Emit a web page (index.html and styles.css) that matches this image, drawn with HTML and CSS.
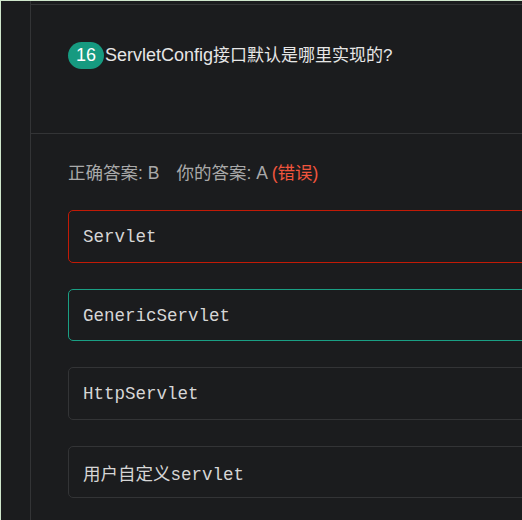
FILE: index.html
```html
<!DOCTYPE html>
<html lang="zh">
<head>
<meta charset="utf-8">
<link rel="stylesheet" href="styles.css">
</head>
<body>
<div class="page">
  <div class="side"></div>
  <div class="main">
    <div class="header">
      <div class="title">
        <span class="badge">16</span><span class="qtext">ServletConfig<span class="cjk">接口默认是哪里实现的?</span></span>
      </div>
    </div>
    <div class="body">
      <div class="result">正确答案: B<span class="sp"></span>你的答案: A <span class="wrong">(错误)</span></div>
      <div class="options">
        <div class="opt opt-wrong">Servlet</div>
        <div class="opt opt-right">GenericServlet</div>
        <div class="opt">HttpServlet</div>
        <div class="opt">用户自定义servlet</div>
      </div>
    </div>
  </div>
</div>
</body>
</html>
```
FILE: styles.css
```css
html, body {
  margin: 0;
  padding: 0;
  background: #1b1c1e;
  overflow: hidden;
}
.page {
  display: flex;
  height: 519px;
  border-top: 1px solid #cfe6cc;
  border-left: 1px solid #cfe6cc;
  background: #1b1c1e;
  font-family: "Liberation Sans", "Noto Sans CJK SC", sans-serif;
}
.side {
  width: 29px;
  flex: none;
}
.main {
  flex: 1;
  border-left: 1px solid #333436;
  padding-top: 3px;
  overflow: hidden;
}
.header {
  height: 128px;
  box-sizing: content-box;
  border-top: 1px solid #333436;
  border-bottom: 1px solid #333436;
  padding-left: 37px;
}
.title {
  display: flex;
  align-items: center;
  padding-top: 37px;
}
.badge {
  display: inline-block;
  width: 36px;
  height: 27px;
  line-height: 27px;
  border-radius: 14px;
  background: #169a80;
  color: #ffffff;
  font-size: 18px;
  text-align: center;
  flex: none;
}
.qtext {
  margin-left: 1px;
  color: #e6e6e6;
  font-size: 18px;
  line-height: 27px;
}
.cjk {
  font-size: 17px;
}
.body {
  padding: 26px 0 0 37px;
}
.result {
  color: #a9a9a9;
  font-size: 17.5px;
  line-height: 24px;
  height: 24px;
  padding-top: 1px;
}
.sp {
  display: inline-block;
  width: 17px;
}
.wrong {
  color: #f1553d;
}
.options {
  display: flex;
  flex-direction: column;
  gap: 26px;
  margin-top: 25px;
}
.opt {
  box-sizing: border-box;
  width: 520px;
  height: 52.5px;
  border: 1px solid #333436;
  border-radius: 5px;
  padding: 2px 0 0 14px;
  display: flex;
  align-items: center;
  color: #d6d6d6;
  font-family: "Liberation Mono", "Noto Sans CJK SC", monospace;
  font-size: 17.5px;
}
.opt-wrong {
  border-color: #c21a06;
}
.opt-right {
  border-color: #1a9f84;
}
```
